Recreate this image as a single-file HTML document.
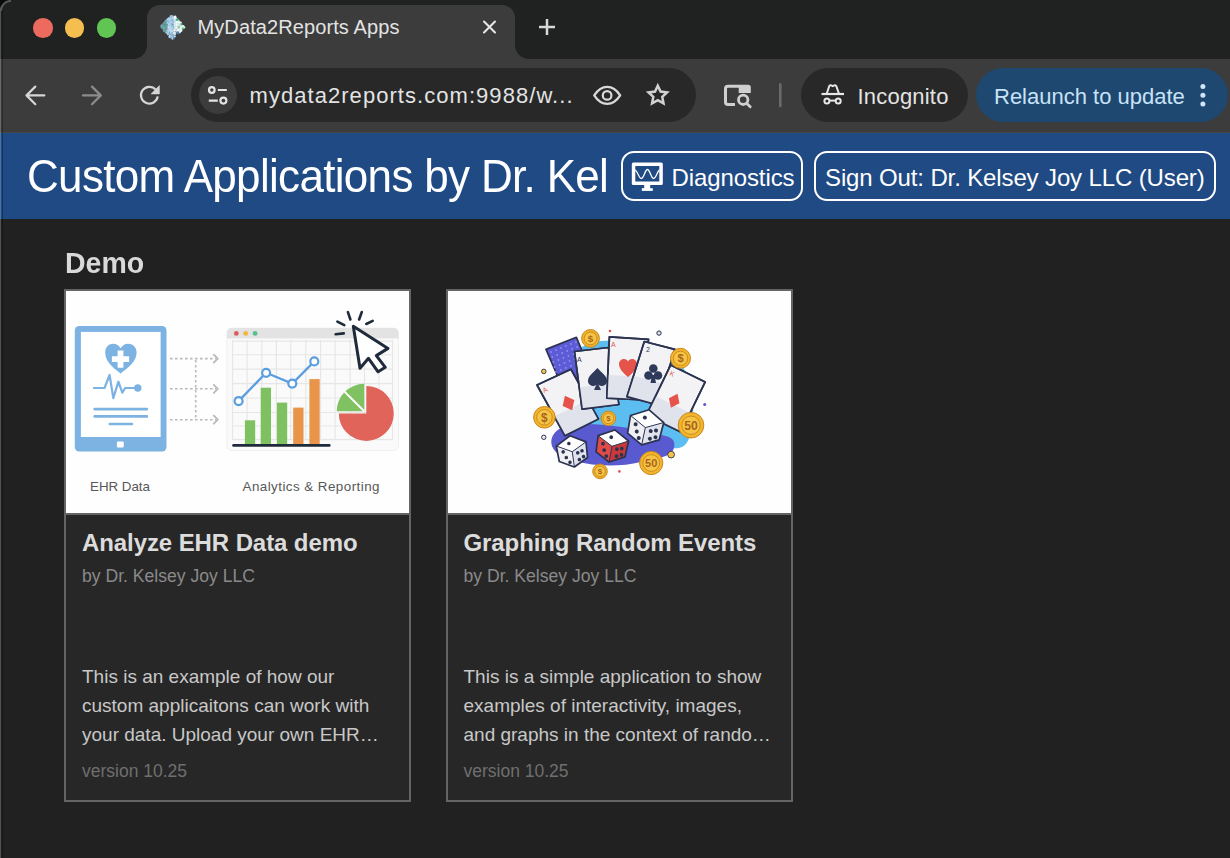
<!DOCTYPE html>
<html><head><meta charset="utf-8">
<style>
*{box-sizing:border-box;margin:0;padding:0}
html,body{width:1230px;height:858px;overflow:hidden;background:#212121;font-family:"Liberation Sans",sans-serif}
.abs{position:absolute}
#tabstrip{left:0;top:0;width:1230px;height:59px;background:#202121}
#toolbar{left:0;top:59px;width:1230px;height:74px;background:#3c3c3c}
#header{left:0;top:133px;width:1230px;height:86px;background:#1f4a84}
#winborder{left:0;top:0;width:3px;height:858px;border-left:1.8px solid rgba(255,255,255,0.22);border-right:1.2px solid rgba(0,0,0,0.3)}
.light{border-radius:50%;width:19.5px;height:19.5px;top:18px}
#tab{left:146.5px;top:5px;width:368px;height:54px;background:#3c3c3c;border-radius:13px 13px 0 0}
.flare{width:14px;height:14px;top:45px;background:#3c3c3c}
.flare i{position:absolute;left:0;top:0;width:14px;height:14px;background:#202121}
.tabtitle{left:197.5px;top:14px;font-size:20px;color:#e3e3e3;white-space:nowrap;line-height:26px;letter-spacing:0.1px}
#omni{left:191px;top:68px;width:505px;height:54px;background:#282828;border-radius:27px}
.pill{border-radius:27px;height:54px;top:68px}
.url{left:249.5px;top:83px;font-size:22px;color:#e3e3e3;white-space:nowrap;line-height:26px;letter-spacing:1.05px}
.title{left:27px;top:152px;width:582px;height:50px;overflow:hidden;font-size:44px;color:#fff;white-space:nowrap;line-height:50px;letter-spacing:-0.68px;transform:scaleY(1.07);transform-origin:0 39.5px}
.btn{border:2px solid #fff;border-radius:13px;height:50px;top:151px;color:#fff;font-size:24px;line-height:50px;white-space:nowrap}
.demo{left:65px;top:246px;font-size:28.5px;font-weight:700;color:#d9d9d9;line-height:34px;transform:scaleY(1.03);transform-origin:0 27px}
.card{top:289px;width:347px;height:513px;border:2px solid #646464;background:#272727}
.card .img{position:absolute;left:0;top:0;width:343px;height:224px;background:#fff;border-bottom:2px solid #646464;overflow:hidden}
.ct{position:absolute;left:16px;top:238px;font-size:24px;letter-spacing:-0.09px;font-weight:700;color:#dcdcdc;white-space:nowrap;line-height:28px}
.cs{position:absolute;left:16px;top:274.5px;font-size:17.6px;color:#8a8a8a;white-space:nowrap;line-height:20px}
.cd{position:absolute;left:16px;top:371px;width:330px;font-size:19px;white-space:nowrap;color:#c8c8c8;line-height:29px}
.cv{position:absolute;left:16px;top:470px;font-size:17.5px;color:#6f6f6f;white-space:nowrap;line-height:20px}
</style></head>
<body>
<div id="tabstrip" class="abs"></div>
<div id="toolbar" class="abs"></div>
<div id="header" class="abs"></div>
<div class="abs" style="left:0;top:132px;width:1230px;height:1px;background:#474747"></div>
<div id="winborder" class="abs"></div>
<svg class="abs" style="left:0;top:0" width="14" height="14"><path d="M0 0 H11 A11 11 0 0 0 0 11 Z" fill="#0a0a0a"/><path d="M11 0.9 A10.1 10.1 0 0 0 0.9 11" fill="none" stroke="#5a5a5a" stroke-width="1.8"/></svg>

<!-- traffic lights -->
<div class="abs light" style="left:33px;background:#ec6a5e"></div>
<div class="abs light" style="left:64.8px;background:#f4bf4f"></div>
<div class="abs light" style="left:96.7px;background:#61c554"></div>

<!-- tab -->
<div id="tab" class="abs"></div>
<div class="abs flare" style="left:132.5px"><i style="border-bottom-right-radius:14px"></i></div>
<div class="abs flare" style="left:514.5px"><i style="border-bottom-left-radius:14px"></i></div>

<svg class="abs" style="left:155px;top:10px" width="35" height="35" viewBox="0 0 35 35"><defs><filter id="fb" x="-20%" y="-20%" width="140%" height="140%"><feGaussianBlur stdDeviation="0.35"/></filter></defs><g filter="url(#fb)"><path d="M17.5 5 L23.5 8.5 L27.5 14.5 L26 21 L22 23 L18.5 29 L14 25 L8 21 L6 15 L11 9 Z" fill="#a9cbe0" opacity="0.5"/><circle cx="16.2" cy="10.0" r="1.10" fill="#9cc6e6" opacity="0.90"/><circle cx="20.1" cy="6.9" r="1.38" fill="#e8f3f8" opacity="0.95"/><circle cx="20.3" cy="8.3" r="1.38" fill="#ffffff" opacity="0.95"/><circle cx="11.8" cy="19.5" r="1.12" fill="#9cc6e6" opacity="0.90"/><circle cx="13.2" cy="11.6" r="0.83" fill="#7fb2dc" opacity="0.90"/><circle cx="16.3" cy="8.2" r="1.38" fill="#7fb2dc" opacity="0.90"/><circle cx="24.5" cy="13.2" r="1.29" fill="#c6e4d6" opacity="0.95"/><circle cx="15.8" cy="22.3" r="0.78" fill="#b6d6ee" opacity="0.90"/><circle cx="16.0" cy="17.1" r="1.24" fill="#7fb2dc" opacity="0.90"/><circle cx="18.2" cy="11.8" r="0.91" fill="#7fb2dc" opacity="0.90"/><circle cx="24.8" cy="20.1" r="1.40" fill="#d4e8f2" opacity="0.95"/><circle cx="14.6" cy="9.8" r="1.28" fill="#7fb2dc" opacity="0.90"/><circle cx="15.8" cy="14.7" r="1.39" fill="#9cc6e6" opacity="0.90"/><circle cx="14.8" cy="8.0" r="0.80" fill="#7fb2dc" opacity="0.90"/><circle cx="15.8" cy="16.4" r="1.04" fill="#7fb2dc" opacity="0.90"/><circle cx="11.6" cy="14.2" r="0.78" fill="#6ab0b8" opacity="0.69"/><circle cx="25.4" cy="17.6" r="1.14" fill="#ffffff" opacity="0.95"/><circle cx="17.0" cy="12.5" r="1.04" fill="#9cc6e6" opacity="0.90"/><circle cx="17.4" cy="18.0" r="0.74" fill="#7fb2dc" opacity="0.90"/><circle cx="24.7" cy="12.9" r="1.16" fill="#c6e4d6" opacity="0.95"/><circle cx="23.8" cy="13.1" r="1.28" fill="#d4e8f2" opacity="0.95"/><circle cx="26.1" cy="16.1" r="0.93" fill="#d4e8f2" opacity="0.95"/><circle cx="11.1" cy="11.2" r="0.94" fill="#4e9a88" opacity="0.66"/><circle cx="25.5" cy="12.8" r="1.31" fill="#ffffff" opacity="0.95"/><circle cx="28.9" cy="17.2" r="1.39" fill="#c6e4d6" opacity="0.95"/><circle cx="9.2" cy="13.1" r="0.90" fill="#7bb6c8" opacity="0.55"/><circle cx="14.8" cy="19.8" r="0.91" fill="#cfe4f2" opacity="0.90"/><circle cx="18.4" cy="26.5" r="1.20" fill="#7fb2dc" opacity="0.90"/><circle cx="15.5" cy="20.7" r="1.23" fill="#b6d6ee" opacity="0.90"/><circle cx="16.5" cy="18.0" r="1.03" fill="#cfe4f2" opacity="0.90"/><circle cx="13.9" cy="19.7" r="0.87" fill="#b6d6ee" opacity="0.90"/><circle cx="14.5" cy="10.9" r="1.31" fill="#cfe4f2" opacity="0.90"/><circle cx="21.9" cy="18.0" r="1.08" fill="#e8f3f8" opacity="0.95"/><circle cx="11.8" cy="11.3" r="1.37" fill="#7fb2dc" opacity="0.90"/><circle cx="11.6" cy="12.8" r="0.99" fill="#6ab0b8" opacity="0.69"/><circle cx="25.1" cy="20.5" r="1.03" fill="#d4e8f2" opacity="0.95"/><circle cx="16.4" cy="8.8" r="1.13" fill="#b6d6ee" opacity="0.90"/><circle cx="18.7" cy="19.8" r="0.93" fill="#b6d6ee" opacity="0.90"/><circle cx="26.8" cy="18.5" r="1.00" fill="#eaf4f8" opacity="0.95"/><circle cx="19.5" cy="10.4" r="1.05" fill="#d4e8f2" opacity="0.95"/><circle cx="14.8" cy="12.0" r="1.04" fill="#7fb2dc" opacity="0.90"/><circle cx="11.4" cy="16.1" r="1.16" fill="#5fa6a0" opacity="0.68"/><circle cx="14.2" cy="16.2" r="0.87" fill="#7fb2dc" opacity="0.90"/><circle cx="16.7" cy="25.9" r="0.91" fill="#7fb2dc" opacity="0.90"/><circle cx="19.8" cy="16.1" r="1.32" fill="#c6e4d6" opacity="0.95"/><circle cx="22.4" cy="19.8" r="0.72" fill="#c6e4d6" opacity="0.95"/><circle cx="13.1" cy="21.6" r="0.73" fill="#b6d6ee" opacity="0.90"/><circle cx="10.6" cy="15.6" r="1.32" fill="#5fa6a0" opacity="0.63"/><circle cx="24.2" cy="14.8" r="1.18" fill="#c6e4d6" opacity="0.95"/><circle cx="16.4" cy="21.6" r="1.33" fill="#b6d6ee" opacity="0.90"/><circle cx="16.1" cy="23.6" r="1.29" fill="#7fb2dc" opacity="0.90"/><circle cx="22.1" cy="15.0" r="1.15" fill="#d4e8f2" opacity="0.95"/><circle cx="16.3" cy="11.7" r="1.03" fill="#b6d6ee" opacity="0.90"/><circle cx="18.3" cy="16.7" r="1.08" fill="#7fb2dc" opacity="0.90"/><circle cx="15.1" cy="17.8" r="0.75" fill="#9cc6e6" opacity="0.90"/><circle cx="24.6" cy="21.1" r="0.93" fill="#e8f3f8" opacity="0.95"/><circle cx="14.5" cy="16.4" r="1.29" fill="#9cc6e6" opacity="0.90"/><circle cx="9.7" cy="20.6" r="1.20" fill="#5fa6a0" opacity="0.58"/><circle cx="19.9" cy="14.5" r="0.75" fill="#ffffff" opacity="0.95"/><circle cx="9.5" cy="18.2" r="1.22" fill="#7bb6c8" opacity="0.57"/><circle cx="11.3" cy="18.6" r="1.22" fill="#5fa6a0" opacity="0.67"/><circle cx="15.2" cy="11.8" r="1.04" fill="#cfe4f2" opacity="0.90"/><circle cx="17.2" cy="27.6" r="0.88" fill="#b6d6ee" opacity="0.90"/><circle cx="18.3" cy="10.2" r="1.06" fill="#7fb2dc" opacity="0.90"/><circle cx="13.7" cy="23.0" r="0.79" fill="#b6d6ee" opacity="0.90"/><circle cx="26.4" cy="16.9" r="0.87" fill="#eaf4f8" opacity="0.95"/><circle cx="26.8" cy="16.2" r="0.78" fill="#d4e8f2" opacity="0.95"/><circle cx="17.8" cy="17.9" r="0.74" fill="#cfe4f2" opacity="0.90"/><circle cx="21.7" cy="9.4" r="0.76" fill="#e8f3f8" opacity="0.95"/><circle cx="27.7" cy="16.5" r="0.80" fill="#ffffff" opacity="0.95"/><circle cx="20.2" cy="12.9" r="0.90" fill="#ffffff" opacity="0.95"/><circle cx="24.7" cy="13.5" r="1.15" fill="#d4e8f2" opacity="0.95"/><circle cx="24.9" cy="15.0" r="1.06" fill="#d4e8f2" opacity="0.95"/><circle cx="19.4" cy="18.7" r="0.98" fill="#ffffff" opacity="0.95"/><circle cx="27.1" cy="16.2" r="0.70" fill="#d4e8f2" opacity="0.95"/><circle cx="16.2" cy="27.1" r="0.93" fill="#cfe4f2" opacity="0.90"/><circle cx="16.0" cy="8.6" r="0.75" fill="#b6d6ee" opacity="0.90"/><circle cx="16.2" cy="18.1" r="0.89" fill="#9cc6e6" opacity="0.90"/><circle cx="10.1" cy="16.3" r="0.94" fill="#5fa6a0" opacity="0.60"/><circle cx="23.6" cy="11.9" r="1.18" fill="#e8f3f8" opacity="0.95"/><circle cx="21.5" cy="16.0" r="0.78" fill="#ffffff" opacity="0.95"/><circle cx="21.4" cy="11.2" r="1.21" fill="#ffffff" opacity="0.95"/><circle cx="12.1" cy="15.9" r="0.75" fill="#7fb2dc" opacity="0.90"/><circle cx="19.8" cy="22.8" r="0.70" fill="#d4e8f2" opacity="0.95"/><circle cx="17.5" cy="12.8" r="1.20" fill="#9cc6e6" opacity="0.90"/><circle cx="6.4" cy="16.0" r="1.15" fill="#6ab0b8" opacity="0.39"/><circle cx="16.9" cy="24.2" r="0.88" fill="#9cc6e6" opacity="0.90"/><circle cx="14.6" cy="11.6" r="1.31" fill="#9cc6e6" opacity="0.90"/><circle cx="22.1" cy="20.5" r="1.07" fill="#ffffff" opacity="0.95"/><circle cx="6.8" cy="17.9" r="1.12" fill="#6ab0b8" opacity="0.41"/><circle cx="16.7" cy="18.6" r="1.07" fill="#cfe4f2" opacity="0.90"/><circle cx="23.7" cy="21.7" r="1.09" fill="#ffffff" opacity="0.95"/><circle cx="7.6" cy="16.3" r="1.27" fill="#4e9a88" opacity="0.46"/><circle cx="19.0" cy="10.0" r="1.04" fill="#9cc6e6" opacity="0.90"/><circle cx="10.5" cy="22.1" r="1.32" fill="#4e9a88" opacity="0.62"/><circle cx="24.0" cy="13.6" r="0.70" fill="#c6e4d6" opacity="0.95"/><circle cx="18.6" cy="12.0" r="0.82" fill="#7fb2dc" opacity="0.90"/><circle cx="10.8" cy="21.4" r="0.72" fill="#4e9a88" opacity="0.64"/><circle cx="18.1" cy="23.1" r="0.72" fill="#9cc6e6" opacity="0.90"/><circle cx="10.0" cy="14.9" r="0.84" fill="#4e9a88" opacity="0.60"/><circle cx="20.1" cy="7.8" r="0.89" fill="#e8f3f8" opacity="0.95"/><circle cx="19.8" cy="20.2" r="1.01" fill="#ffffff" opacity="0.95"/><circle cx="27.8" cy="15.7" r="0.82" fill="#eaf4f8" opacity="0.95"/><circle cx="8.2" cy="16.0" r="1.12" fill="#7bb6c8" opacity="0.49"/><circle cx="19.0" cy="16.3" r="0.97" fill="#7fb2dc" opacity="0.90"/><circle cx="9.2" cy="18.4" r="1.24" fill="#4e9a88" opacity="0.55"/><circle cx="24.4" cy="13.2" r="1.27" fill="#ffffff" opacity="0.95"/><circle cx="5.6" cy="16.6" r="0.80" fill="#4e9a88" opacity="0.34"/><circle cx="25.6" cy="16.5" r="0.77" fill="#e8f3f8" opacity="0.95"/><circle cx="14.3" cy="23.5" r="1.33" fill="#7fb2dc" opacity="0.90"/><circle cx="12.4" cy="21.6" r="1.26" fill="#9cc6e6" opacity="0.90"/><circle cx="17.3" cy="19.0" r="1.27" fill="#b6d6ee" opacity="0.90"/><circle cx="19.9" cy="17.1" r="1.03" fill="#c6e4d6" opacity="0.95"/><circle cx="22.3" cy="14.1" r="1.35" fill="#c6e4d6" opacity="0.95"/><circle cx="22.0" cy="21.3" r="0.80" fill="#c6e4d6" opacity="0.95"/><circle cx="19.9" cy="26.4" r="0.91" fill="#eaf4f8" opacity="0.95"/><circle cx="23.6" cy="21.3" r="1.33" fill="#d4e8f2" opacity="0.95"/><circle cx="23.2" cy="19.7" r="1.04" fill="#ffffff" opacity="0.95"/><circle cx="12.9" cy="24.3" r="0.98" fill="#cfe4f2" opacity="0.90"/><circle cx="20.0" cy="13.7" r="1.29" fill="#e8f3f8" opacity="0.95"/><circle cx="8.8" cy="20.9" r="0.99" fill="#7bb6c8" opacity="0.53"/><circle cx="15.1" cy="17.5" r="0.91" fill="#b6d6ee" opacity="0.90"/><circle cx="11.3" cy="19.5" r="0.83" fill="#4e9a88" opacity="0.67"/><circle cx="18.6" cy="19.5" r="1.00" fill="#b6d6ee" opacity="0.90"/><circle cx="24.5" cy="12.2" r="0.74" fill="#e8f3f8" opacity="0.95"/><circle cx="16.6" cy="25.6" r="0.92" fill="#9cc6e6" opacity="0.90"/><circle cx="26.1" cy="20.6" r="1.33" fill="#ffffff" opacity="0.95"/><circle cx="20.0" cy="24.6" r="0.70" fill="#e8f3f8" opacity="0.95"/><circle cx="12.7" cy="13.2" r="1.10" fill="#9cc6e6" opacity="0.90"/><circle cx="15.5" cy="12.1" r="1.20" fill="#b6d6ee" opacity="0.90"/><circle cx="13.7" cy="15.7" r="0.87" fill="#9cc6e6" opacity="0.90"/><circle cx="28.5" cy="15.8" r="0.78" fill="#e8f3f8" opacity="0.95"/><circle cx="19.5" cy="13.4" r="1.05" fill="#e8f3f8" opacity="0.95"/><circle cx="22.8" cy="11.3" r="1.27" fill="#e8f3f8" opacity="0.95"/><circle cx="11.0" cy="22.6" r="0.89" fill="#6ab0b8" opacity="0.66"/><circle cx="6.5" cy="16.2" r="1.08" fill="#6ab0b8" opacity="0.39"/><circle cx="23.9" cy="13.1" r="0.71" fill="#e8f3f8" opacity="0.95"/><circle cx="17.5" cy="28.8" r="1.06" fill="#cfe4f2" opacity="0.90"/><circle cx="24.2" cy="15.0" r="1.36" fill="#c6e4d6" opacity="0.95"/><circle cx="21.2" cy="19.9" r="0.73" fill="#c6e4d6" opacity="0.95"/><circle cx="14.7" cy="26.7" r="1.34" fill="#cfe4f2" opacity="0.90"/><circle cx="15.0" cy="10.7" r="0.95" fill="#cfe4f2" opacity="0.90"/><circle cx="23.4" cy="16.6" r="1.12" fill="#d4e8f2" opacity="0.95"/><circle cx="15.2" cy="10.6" r="0.93" fill="#7fb2dc" opacity="0.90"/><circle cx="18.5" cy="11.0" r="1.15" fill="#9cc6e6" opacity="0.90"/><circle cx="13.7" cy="13.3" r="1.08" fill="#cfe4f2" opacity="0.90"/><circle cx="15.5" cy="26.6" r="0.88" fill="#b6d6ee" opacity="0.90"/><circle cx="18.2" cy="22.9" r="0.87" fill="#b6d6ee" opacity="0.90"/><circle cx="24.2" cy="18.3" r="1.02" fill="#eaf4f8" opacity="0.95"/><circle cx="13.6" cy="17.5" r="1.39" fill="#cfe4f2" opacity="0.90"/><circle cx="15.7" cy="23.0" r="0.77" fill="#cfe4f2" opacity="0.90"/><circle cx="17.3" cy="25.2" r="1.28" fill="#7fb2dc" opacity="0.90"/><circle cx="16.9" cy="18.5" r="1.10" fill="#b6d6ee" opacity="0.90"/><circle cx="13.7" cy="12.5" r="1.04" fill="#7fb2dc" opacity="0.90"/><circle cx="24.5" cy="22.1" r="1.31" fill="#c6e4d6" opacity="0.95"/><circle cx="15.4" cy="27.3" r="1.12" fill="#b6d6ee" opacity="0.90"/><circle cx="18.7" cy="27.4" r="1.09" fill="#7fb2dc" opacity="0.90"/><circle cx="25.4" cy="16.6" r="0.72" fill="#e8f3f8" opacity="0.95"/><circle cx="14.7" cy="14.4" r="1.13" fill="#cfe4f2" opacity="0.90"/><circle cx="10.7" cy="11.4" r="1.32" fill="#5fa6a0" opacity="0.64"/><circle cx="12.4" cy="20.9" r="1.03" fill="#cfe4f2" opacity="0.90"/><circle cx="15.1" cy="20.0" r="0.82" fill="#cfe4f2" opacity="0.90"/><circle cx="7.6" cy="16.5" r="1.35" fill="#7bb6c8" opacity="0.46"/><circle cx="15.3" cy="18.4" r="1.09" fill="#b6d6ee" opacity="0.90"/><circle cx="21.2" cy="14.6" r="1.29" fill="#d4e8f2" opacity="0.95"/><circle cx="10.7" cy="13.0" r="1.04" fill="#4e9a88" opacity="0.64"/><circle cx="25.1" cy="21.8" r="0.94" fill="#e8f3f8" opacity="0.95"/><circle cx="26.0" cy="18.9" r="1.24" fill="#e8f3f8" opacity="0.95"/><circle cx="18.1" cy="8.1" r="1.21" fill="#7fb2dc" opacity="0.90"/><circle cx="10.8" cy="14.3" r="1.32" fill="#4e9a88" opacity="0.64"/><circle cx="12.1" cy="11.3" r="0.99" fill="#7fb2dc" opacity="0.90"/><circle cx="27.3" cy="16.9" r="1.02" fill="#e8f3f8" opacity="0.95"/><circle cx="28.4" cy="17.8" r="1.18" fill="#e8f3f8" opacity="0.95"/><circle cx="12.4" cy="13.1" r="1.03" fill="#9cc6e6" opacity="0.90"/><circle cx="7.0" cy="17.7" r="1.16" fill="#5fa6a0" opacity="0.42"/><circle cx="21.3" cy="13.6" r="0.89" fill="#e8f3f8" opacity="0.95"/><circle cx="15.1" cy="9.0" r="0.97" fill="#b6d6ee" opacity="0.90"/><circle cx="17.8" cy="7.2" r="1.30" fill="#9cc6e6" opacity="0.90"/><circle cx="20.7" cy="11.6" r="1.34" fill="#c6e4d6" opacity="0.95"/><circle cx="18.9" cy="16.8" r="0.82" fill="#7fb2dc" opacity="0.90"/><circle cx="20.3" cy="15.6" r="1.23" fill="#eaf4f8" opacity="0.95"/><circle cx="19.7" cy="7.1" r="1.02" fill="#ffffff" opacity="0.95"/><circle cx="15.6" cy="9.7" r="0.82" fill="#b6d6ee" opacity="0.90"/><circle cx="10.5" cy="12.9" r="1.08" fill="#5fa6a0" opacity="0.63"/><circle cx="18.4" cy="9.0" r="0.94" fill="#9cc6e6" opacity="0.90"/><circle cx="19.4" cy="20.4" r="1.31" fill="#eaf4f8" opacity="0.95"/><circle cx="17.6" cy="19.5" r="0.74" fill="#7fb2dc" opacity="0.90"/><circle cx="11.5" cy="17.4" r="0.99" fill="#4e9a88" opacity="0.68"/><circle cx="14.9" cy="25.7" r="0.94" fill="#cfe4f2" opacity="0.90"/><circle cx="23.0" cy="16.9" r="1.25" fill="#c6e4d6" opacity="0.95"/><circle cx="21.0" cy="17.8" r="1.24" fill="#eaf4f8" opacity="0.95"/><circle cx="17.9" cy="16.2" r="1.22" fill="#9cc6e6" opacity="0.90"/><circle cx="17.2" cy="21.1" r="1.16" fill="#cfe4f2" opacity="0.90"/><circle cx="14.0" cy="20.6" r="1.15" fill="#b6d6ee" opacity="0.90"/><circle cx="19.1" cy="9.4" r="0.96" fill="#e8f3f8" opacity="0.95"/><circle cx="19.5" cy="23.6" r="1.25" fill="#eaf4f8" opacity="0.95"/><circle cx="15.1" cy="15.8" r="1.24" fill="#b6d6ee" opacity="0.90"/><circle cx="6.8" cy="15.6" r="1.33" fill="#7bb6c8" opacity="0.41"/><circle cx="16.2" cy="11.2" r="0.72" fill="#9cc6e6" opacity="0.90"/><circle cx="20.0" cy="22.5" r="0.84" fill="#c6e4d6" opacity="0.95"/><circle cx="20.9" cy="15.3" r="0.84" fill="#c6e4d6" opacity="0.95"/><circle cx="11.8" cy="22.8" r="0.97" fill="#cfe4f2" opacity="0.90"/><circle cx="14.0" cy="8.5" r="0.98" fill="#b6d6ee" opacity="0.90"/><circle cx="15.7" cy="14.3" r="0.89" fill="#9cc6e6" opacity="0.90"/><circle cx="17.6" cy="8.8" r="1.23" fill="#7fb2dc" opacity="0.90"/><circle cx="24.6" cy="14.5" r="1.32" fill="#c6e4d6" opacity="0.95"/><circle cx="22.6" cy="15.3" r="0.84" fill="#ffffff" opacity="0.95"/><circle cx="19.1" cy="22.5" r="0.83" fill="#e8f3f8" opacity="0.95"/><circle cx="17.9" cy="25.8" r="1.14" fill="#7fb2dc" opacity="0.90"/><circle cx="22.4" cy="15.0" r="1.14" fill="#ffffff" opacity="0.95"/><circle cx="8.7" cy="17.9" r="1.36" fill="#7bb6c8" opacity="0.52"/><circle cx="23.3" cy="22.1" r="1.37" fill="#eaf4f8" opacity="0.95"/><circle cx="23.7" cy="16.2" r="1.02" fill="#c6e4d6" opacity="0.95"/><circle cx="18.0" cy="8.0" r="1.09" fill="#cfe4f2" opacity="0.90"/><circle cx="16.5" cy="6.4" r="1.24" fill="#9cc6e6" opacity="0.90"/><circle cx="16.6" cy="5.7" r="0.77" fill="#7fb2dc" opacity="0.90"/><circle cx="23.0" cy="14.3" r="0.95" fill="#d4e8f2" opacity="0.95"/><circle cx="16.7" cy="26.8" r="1.01" fill="#b6d6ee" opacity="0.90"/><circle cx="21.5" cy="10.0" r="1.28" fill="#d4e8f2" opacity="0.95"/><circle cx="13.8" cy="14.5" r="0.94" fill="#b6d6ee" opacity="0.90"/><circle cx="12.9" cy="9.0" r="1.02" fill="#9cc6e6" opacity="0.90"/><circle cx="12.5" cy="21.7" r="1.19" fill="#cfe4f2" opacity="0.90"/><circle cx="16.0" cy="27.1" r="1.06" fill="#7fb2dc" opacity="0.90"/><circle cx="6.4" cy="17.0" r="0.99" fill="#7bb6c8" opacity="0.39"/><circle cx="18.8" cy="19.1" r="0.75" fill="#9cc6e6" opacity="0.90"/><circle cx="11.4" cy="20.9" r="1.00" fill="#5fa6a0" opacity="0.68"/><circle cx="11.7" cy="21.9" r="1.29" fill="#7bb6c8" opacity="0.69"/><circle cx="8.6" cy="16.1" r="1.29" fill="#4e9a88" opacity="0.52"/><circle cx="12.8" cy="20.1" r="0.97" fill="#9cc6e6" opacity="0.90"/><circle cx="22.9" cy="15.6" r="0.83" fill="#d4e8f2" opacity="0.95"/><circle cx="21.8" cy="11.9" r="1.13" fill="#ffffff" opacity="0.95"/><circle cx="15.4" cy="19.8" r="0.78" fill="#cfe4f2" opacity="0.90"/><circle cx="13.8" cy="8.6" r="1.16" fill="#b6d6ee" opacity="0.90"/><circle cx="10.3" cy="16.7" r="1.33" fill="#5fa6a0" opacity="0.62"/><circle cx="24.2" cy="11.6" r="0.94" fill="#d4e8f2" opacity="0.95"/><circle cx="12.2" cy="13.3" r="0.72" fill="#9cc6e6" opacity="0.90"/><circle cx="18.5" cy="13.7" r="0.90" fill="#9cc6e6" opacity="0.90"/><circle cx="15.9" cy="6.7" r="1.35" fill="#9cc6e6" opacity="0.90"/><circle cx="12.3" cy="9.9" r="0.70" fill="#cfe4f2" opacity="0.90"/><circle cx="28.6" cy="17.3" r="0.92" fill="#d4e8f2" opacity="0.95"/><circle cx="22" cy="9.8" r="1.3" fill="#3dbb6a"/><circle cx="26.3" cy="14" r="1.1" fill="#4cc070"/><circle cx="27.8" cy="18.6" r="1.1" fill="#4cc070"/><circle cx="24" cy="17" r="0.9" fill="#5ec880"/><circle cx="23" cy="22.5" r="1.2" fill="#3a84c8"/><circle cx="18.8" cy="28.2" r="1" fill="#3a84c8"/></g></svg>
<div class="abs tabtitle">MyData2Reports Apps</div>

<!-- omnibox -->
<div id="omni" class="abs"></div>
<div class="abs url">mydata2reports.com:9988/w...</div>

<!-- incognito -->
<div class="abs pill" style="left:801px;width:167px;background:#282828"></div>
<div class="abs" style="left:857.5px;top:83.5px;font-size:22px;color:#e3e3e3;line-height:26px;letter-spacing:0.2px">Incognito</div>
<div class="abs pill" style="left:976px;width:252px;background:#1f4870"></div>
<div class="abs" style="left:994px;top:83.5px;font-size:22px;color:#c7e3f8;line-height:26px;letter-spacing:0px">Relaunch to update</div>

<!-- header -->
<div class="abs title">Custom Applications by Dr. Kelsey Joy LLC</div>
<div class="abs btn" style="left:621px;width:182px;padding-left:48.5px;letter-spacing:-0.1px">Diagnostics</div>
<div class="abs btn" style="left:814px;width:402px;padding-left:9px;letter-spacing:-0.13px">Sign Out: Dr. Kelsey Joy LLC (User)</div>


<svg class="abs" style="left:0;top:0" width="1230" height="219" viewBox="0 0 1230 219">
 <g fill="none" stroke="#e3e3e3" stroke-width="2" stroke-linecap="round">
  <path d="M484 21.5 L495 32.5 M495 21.5 L484 32.5" stroke="#e6e6e6" stroke-width="2.1"/>
  <path d="M547 19 V35 M539 27 H555" stroke="#d8d8d8" stroke-width="2.5" stroke-linecap="butt"/>
 </g>
 <g fill="none" stroke="#d5d5d5" stroke-width="2.2" stroke-linecap="round" stroke-linejoin="round">
  <path d="M44.3 95.4 H27 M35.3 86.6 L26.5 95.4 L35.3 104.2"/>
  <path d="M83 95.4 H100.3 M92 86.6 L100.8 95.4 L92 104.2" stroke="#8c8c8c"/>
  <path d="M157.7 96.4 A8.4 8.4 0 1 1 155.6 89.6" stroke-linecap="butt"/>
 </g>
 <path d="M159.4 85.6 V93.9 H151 Z" fill="#d5d5d5" stroke="#d5d5d5" stroke-width="0.6" stroke-linejoin="round"/>
 <circle cx="218" cy="95" r="19" fill="#3c3c3c"/>
 <g fill="none" stroke="#e3e3e3" stroke-width="2.2">
  <circle cx="211.8" cy="90" r="2.8"/>
  <circle cx="223.4" cy="100.6" r="3"/>
  <path d="M217.8 90 H226.8 M208.8 100.6 H217.8"/>
 </g>
 <g fill="none" stroke="#d9d9d9" stroke-width="2.3">
  <path d="M594.2 95.3 C598 89.5, 602 86.8, 607.2 86.8 C612.4 86.8, 616.4 89.5, 620.2 95.3 C616.4 101.1, 612.4 103.8, 607.2 103.8 C602 103.8, 598 101.1, 594.2 95.3 Z" stroke-linejoin="round"/>
  <circle cx="607.1" cy="95.4" r="4.3" stroke-width="2.2"/>
  <path d="M657.80,85.70 L660.56,91.60 L667.03,92.40 L662.27,96.85 L663.50,103.25 L657.80,100.10 L652.10,103.25 L653.33,96.85 L648.57,92.40 L655.04,91.60Z" stroke-width="2.5" stroke-linejoin="miter" stroke="#d2d2d2"/>
 </g>
 <g fill="none" stroke="#d0d0d0" stroke-width="3">
  <path d="M735 104.4 H728 Q725.5 104.4 725.5 101.9 V88.7 Q725.5 86.2 728 86.2 H739"/>
  <circle cx="743.2" cy="99.8" r="4.7" stroke-width="2.8"/>
  <path d="M746.8 103.5 L750.2 106.8" stroke-width="2.8" stroke-linecap="round"/>
 </g>
 <path d="M738.7 84.7 H748 Q750.8 84.7 750.8 87.5 V92.9 H738.7 Z" fill="#d0d0d0"/>
 <rect x="779" y="83" width="2.6" height="24.3" rx="1.3" fill="#6a6a6a"/>
 <g fill="none" stroke="#e8e8e8" stroke-width="2.2" stroke-linejoin="round">
  <path d="M821.5 94 H844"/>
  <path d="M826.8 93.5 L829.2 86.2 Q829.7 85 831.2 85.4 L832.7 86.2 L834.3 85.4 Q835.8 85 836.3 86.2 L838.9 93.5" stroke-width="2"/>
  <circle cx="826.9" cy="101" r="2.5" stroke-width="2"/>
  <circle cx="838.2" cy="101" r="2.5" stroke-width="2"/>
  <path d="M829.5 100.6 H835.6" stroke-width="2"/>
 </g>
 <g fill="#cfe6fa">
  <circle cx="1202.9" cy="86.5" r="2.5"/><circle cx="1202.9" cy="95.3" r="2.5"/><circle cx="1202.9" cy="104" r="2.5"/>
 </g>
 <g fill="#fff">
  <path fill-rule="evenodd" d="M633.3 162.5 H661.3 Q662.8 162.5 662.8 164 V183.4 Q662.8 184.9 661.3 184.9 H633.3 Q631.8 184.9 631.8 183.4 V164 Q631.8 162.5 633.3 162.5 Z M635.3 166 V181.4 H659.3 V166 Z"/>
  <rect x="644.2" y="184" width="6" height="5"/>
  <rect x="641.8" y="188.2" width="11" height="2.7"/>
 </g>
 <path d="M635.2 170 C638 172, 639 178.5, 641.2 178.5 C644 178.5, 645 169.5, 647.4 169.5 C650 169.5, 651 178.5, 653.5 178.5 C656 178.5, 657 172, 659.4 170" fill="none" stroke="#fff" stroke-width="1.3"/>
</svg>

<div class="abs demo">Demo</div>

<div class="abs card" style="left:64px">
  <div class="img"><svg width="343" height="222" viewBox="66 291 343 222" style="position:absolute;left:0;top:0">
 <rect x="66" y="291" width="343" height="222" fill="#fefefe"/>
 <!-- tablet -->
 <rect x="74.8" y="326" width="91.7" height="125.5" rx="4.5" fill="#7db3e2"/>
 <rect x="80.9" y="331.9" width="79.7" height="105.1" fill="#fff"/>
 <rect x="116.9" y="441.4" width="6.8" height="6.2" rx="1" fill="#fff"/>
 <path d="M120.6 373.5 C112 367, 105.2 361, 105.2 352.5 C105.2 347, 109 343.7, 113.2 343.7 C116.5 343.7, 119 345.5, 120.6 348.2 C122.2 345.5, 124.7 343.7, 128 343.7 C132.5 343.7, 136.6 347, 136.6 352.5 C136.6 361, 129.2 367, 120.6 373.5 Z" fill="#7db3e2"/>
 <path d="M117.6 350.5 H123.4 V356.2 H129.1 V362 H123.4 V367.7 H117.6 V362 H111.9 V356.2 H117.6 Z" fill="#fff"/>
 <path d="M93.9 388 H104.5 L109.6 375 L113.3 398.1 L118.4 381.7 L122.3 392.7 L125.1 388 H137.8" fill="none" stroke="#7db3e2" stroke-width="2.2" stroke-linejoin="round" stroke-linecap="round"/>
 <circle cx="137.8" cy="388" r="3.7" fill="#7db3e2"/>
 <g stroke="#7db3e2" stroke-width="2.6" stroke-linecap="round">
  <path d="M94.6 409.1 H146.9 M94.6 416.4 H146.9 M109.8 424 H132"/>
 </g>
 <!-- dashed connectors -->
 <g stroke="#b9b9b9" stroke-width="1.6" fill="none" stroke-dasharray="2.6 2.4">
  <path d="M170 358.6 H216 M170 388.8 H216 M170 419.7 H216 M195.7 360 V419"/>
 </g>
 <g stroke="#b9b9b9" stroke-width="1.8" fill="none" stroke-linecap="round" stroke-linejoin="round">
  <path d="M213.8 354.6 L217.8 358.6 L213.8 362.6 M213.8 384.8 L217.8 388.8 L213.8 392.8 M213.8 415.7 L217.8 419.7 L213.8 423.7"/>
 </g>
 <!-- browser window -->
 <rect x="226.9" y="328.1" width="171.6" height="122.3" rx="5" fill="#fafafa" stroke="#efefef" stroke-width="1"/>
 <path d="M226.9 338.4 V333.1 Q226.9 328.1 231.9 328.1 H393.5 Q398.5 328.1 398.5 333.1 V338.4 Z" fill="#e3e3e3"/>
 <circle cx="236.3" cy="333.4" r="2.4" fill="#e05c5c"/>
 <circle cx="245.7" cy="333.4" r="2.4" fill="#f0b840"/>
 <circle cx="255.1" cy="333.4" r="2.4" fill="#58c08a"/>
 <g stroke="#e6e6e6" stroke-width="1.1">
  <path d="M232.6 340 V440 M247.1 340 V440 M261.9 340 V440 M276.4 340 V440 M290.8 340 V440 M305.8 340 V440 M320.6 340 V440 M335.1 340 V440 M350.1 340 V440 M364.5 340 V440 M379 340 V440 M392.5 340 V440"/>
  <path d="M232.6 341.1 H392.5 M232.6 354.7 H392.5 M232.6 369.1 H392.5 M232.6 383.6 H392.5 M232.6 398 H392.5 M232.6 412.5 H392.5 M232.6 426 H392.5 M232.6 439.6 H392.5"/>
 </g>
 <rect x="244.9" y="420.3" width="10.3" height="24" fill="#7dc160"/>
 <rect x="260.7" y="387.7" width="10.3" height="56.6" fill="#7dc160"/>
 <rect x="276.9" y="402.6" width="10.3" height="41.7" fill="#7dc160"/>
 <rect x="293.2" y="407.6" width="10.3" height="36.7" fill="#e8944a"/>
 <rect x="309.4" y="379.1" width="10.3" height="65.2" fill="#e8944a"/>
 <path d="M233.5 445.4 H329.3" stroke="#1f2b3b" stroke-width="2.6" stroke-linecap="round"/>
 <path d="M238.6 401.1 L266.1 372.8 L292.3 383.6 L314.3 361.4" fill="none" stroke="#5b9ee0" stroke-width="2.3"/>
 <g fill="#fff" stroke="#5b9ee0" stroke-width="2.2">
  <circle cx="238.6" cy="401.1" r="4"/><circle cx="266.1" cy="372.8" r="4"/><circle cx="292.3" cy="383.6" r="4"/><circle cx="314.3" cy="361.4" r="4"/>
 </g>
 <!-- pie -->
 <path d="M366.3 413.4 V385.9 A27.5 27.5 0 1 1 338.8 413.4 Z" fill="#e0645a"/>
 <path d="M364.2 411.3 H336.7 A27.5 27.5 0 0 1 364.2 383.8 Z" fill="#80c262"/>
 <path d="M364.2 411.3 L343.5 390.6" stroke="#fff" stroke-width="2"/>
 <!-- cursor -->
 <path d="M353.3 326.3 L360 368.2 L368.5 358.3 L378.1 371.8 L385.3 367.3 L376.3 355.6 L388 348.4 Z" fill="#fff" stroke="#1f2b3b" stroke-width="3" stroke-linejoin="round"/>
 <g stroke="#1f2b3b" stroke-width="2.6" stroke-linecap="round">
  <path d="M347.9 312.2 L350.4 319.5 M361.8 312 L359.1 319.5 M337.4 321.6 L344.3 325.2 M366.3 324 L372.7 320.9 M335.6 334.3 L343.8 333.4"/>
 </g>
 <g font-family="Liberation Sans" font-size="13.4" fill="#585858">
  <text x="90" y="490.9" textLength="60" lengthAdjust="spacing">EHR Data</text>
  <text x="242.5" y="490.9" textLength="137" lengthAdjust="spacing">Analytics &amp; Reporting</text>
 </g>
</svg>
</div>
  <div class="ct">Analyze EHR Data demo</div>
  <div class="cs">by Dr. Kelsey Joy LLC</div>
  <div class="cd">This is an example of how our<br>custom applicaitons can work with<br>your data. Upload your own EHR…</div>
  <div class="cv">version 10.25</div>
</div>
<div class="abs card" style="left:445.5px">
  <div class="img"><svg width="343" height="222" viewBox="447 291 343 222" style="position:absolute;left:0;top:0">
<rect x="447" y="291" width="343" height="222" fill="#fefefe"/>
<path d="M575 352 C590 336, 620 340, 650 345 C680 350, 695 380, 692 420 C690 440, 685 450, 672 448 C640 445, 600 440, 570 430 C545 420, 555 365, 575 352 Z" fill="#5cbdf0"/>
<path d="M560 428 C575 420, 620 425, 645 432 C665 436, 676 436, 673 448 C670 458, 655 458, 640 462 C615 468, 585 466, 565 458 C548 452, 545 436, 560 428 Z" fill="#5a5ad0"/>
<path d="M545.0,349.4 L575.4,337.3 L590.0,372.0 L560.0,384.0 Z" fill="#5d5cd6" stroke="#2b3350" stroke-width="1.7" stroke-linejoin="round"/>
<g fill="#8f8ff0"><circle cx="550.0" cy="352.0" r="0.9"/><circle cx="551.2" cy="357.0" r="0.9"/><circle cx="552.4" cy="362.0" r="0.9"/><circle cx="553.6" cy="367.0" r="0.9"/><circle cx="554.8" cy="372.0" r="0.9"/><circle cx="556.0" cy="377.0" r="0.9"/><circle cx="555.0" cy="350.0" r="0.9"/><circle cx="556.2" cy="355.0" r="0.9"/><circle cx="557.4" cy="360.0" r="0.9"/><circle cx="558.6" cy="365.0" r="0.9"/><circle cx="559.8" cy="370.0" r="0.9"/><circle cx="561.0" cy="375.0" r="0.9"/><circle cx="560.0" cy="348.0" r="0.9"/><circle cx="561.2" cy="353.0" r="0.9"/><circle cx="562.4" cy="358.0" r="0.9"/><circle cx="563.6" cy="363.0" r="0.9"/><circle cx="564.8" cy="368.0" r="0.9"/><circle cx="566.0" cy="373.0" r="0.9"/><circle cx="565.0" cy="346.0" r="0.9"/><circle cx="566.2" cy="351.0" r="0.9"/><circle cx="567.4" cy="356.0" r="0.9"/><circle cx="568.6" cy="361.0" r="0.9"/><circle cx="569.8" cy="366.0" r="0.9"/><circle cx="571.0" cy="371.0" r="0.9"/><circle cx="570.0" cy="344.0" r="0.9"/><circle cx="571.2" cy="349.0" r="0.9"/><circle cx="572.4" cy="354.0" r="0.9"/><circle cx="573.6" cy="359.0" r="0.9"/><circle cx="574.8" cy="364.0" r="0.9"/><circle cx="576.0" cy="369.0" r="0.9"/><circle cx="575.0" cy="342.0" r="0.9"/><circle cx="576.2" cy="347.0" r="0.9"/><circle cx="577.4" cy="352.0" r="0.9"/><circle cx="578.6" cy="357.0" r="0.9"/><circle cx="579.8" cy="362.0" r="0.9"/><circle cx="581.0" cy="367.0" r="0.9"/></g>
<path d="M536.0,385.0 L570.0,369.3 L597.4,418.9 L563.8,435.7 Z" fill="#f3f3f5" stroke="#2b3350" stroke-width="1.7" stroke-linejoin="round"/>
<path d="M553.2,416.4 L587.0,400.1 L597.4,418.9 L563.8,435.7 Z" fill="#e0e2ec"/>
<path d="M536.0,385.0 L570.0,369.3 L597.4,418.9 L563.8,435.7 Z" fill="none" stroke="#2b3350" stroke-width="1.7" stroke-linejoin="round"/>
<path d="M567.5 395 L574 403 L567.5 411 L561 403 Z" fill="#e5534b" transform="rotate(-27 567.5 403)"/>
<text x="543" y="393" font-family="Liberation Sans" font-size="7" fill="#e5534b" transform="rotate(-27 543 393)">A</text>
<path d="M573.5,351.5 L607.4,347.5 L617.9,404.5 L581.1,409.2 Z" fill="#f3f3f5" stroke="#2b3350" stroke-width="1.7" stroke-linejoin="round"/>
<path d="M578.2,387.3 L613.9,382.8 L617.9,404.5 L581.1,409.2 Z" fill="#e0e2ec"/>
<path d="M573.5,351.5 L607.4,347.5 L617.9,404.5 L581.1,409.2 Z" fill="none" stroke="#2b3350" stroke-width="1.7" stroke-linejoin="round"/>
<path d="M596.4 368 C592 373, 587 376, 587 381 C587 384.5, 590 386, 592.5 386 C594 386, 595 385, 595.5 384.5 L593 390 H600 L597.3 384.5 C598 385, 599 386, 600.5 386 C603 386, 606 384.5, 606 381 C606 376, 601 373, 596.4 368 Z" fill="#2f3a5a"/>
<text x="576" y="362" font-family="Liberation Sans" font-size="7" fill="#2f3a5a">A</text>
<path d="M608.4,336.8 L647.5,339.4 L643.0,400.0 L605.8,398.2 Z" fill="#f3f3f5" stroke="#2b3350" stroke-width="1.7" stroke-linejoin="round"/>
<path d="M606.8,374.9 L644.7,377.0 L643.0,400.0 L605.8,398.2 Z" fill="#e0e2ec"/>
<path d="M608.4,336.8 L647.5,339.4 L643.0,400.0 L605.8,398.2 Z" fill="none" stroke="#2b3350" stroke-width="1.7" stroke-linejoin="round"/>
<path d="M627 377 C621 372, 618 368, 618 364 C618 361, 620.5 359, 623 359 C625 359, 626.3 360, 627 361.5 C627.7 360, 629 359, 631 359 C633.5 359, 636 361, 636 364 C636 368, 633 372, 627 377 Z" fill="#e5534b"/>
<text x="610" y="347" font-family="Liberation Sans" font-size="7" fill="#e5534b">A</text>
<path d="M643.3,341.5 L673.8,349.4 L657.0,405.0 L626.0,396.6 Z" fill="#f3f3f5" stroke="#2b3350" stroke-width="1.7" stroke-linejoin="round"/>
<path d="M632.6,375.7 L663.4,383.9 L657.0,405.0 L626.0,396.6 Z" fill="#e0e2ec"/>
<path d="M643.3,341.5 L673.8,349.4 L657.0,405.0 L626.0,396.6 Z" fill="none" stroke="#2b3350" stroke-width="1.7" stroke-linejoin="round"/>
<g fill="#2f3a5a"><circle cx="652.3" cy="368.5" r="4.3"/><circle cx="647.5" cy="375.5" r="4.3"/><circle cx="657" cy="375.5" r="4.3"/><path d="M651 375 L653.6 375 L655 383 L649.5 383 Z"/></g>
<text x="645" y="352" font-family="Liberation Sans" font-size="7" fill="#2f3a5a">2</text>
<path d="M669.6,365.1 L704.2,381.9 L679.8,432.1 L645.2,415.3 Z" fill="#f3f3f5" stroke="#2b3350" stroke-width="1.7" stroke-linejoin="round"/>
<path d="M654.5,396.2 L689.1,413.0 L679.8,432.1 L645.2,415.3 Z" fill="#e0e2ec"/>
<path d="M669.6,365.1 L704.2,381.9 L679.8,432.1 L645.2,415.3 Z" fill="none" stroke="#2b3350" stroke-width="1.7" stroke-linejoin="round"/>
<path d="M673.2 393 L679 400.8 L673.2 408.6 L667.4 400.8 Z" fill="#e5534b" transform="rotate(25 673.2 400.8)"/>
<text x="668" y="375" font-family="Liberation Sans" font-size="7" fill="#e5534b" transform="rotate(25 668 375)">K</text>
<g transform="rotate(-8 571.2 451.4)"><path d="M571.2,435.6 L586.2,443.9 L571.2,451.7 L556.2,443.9 Z" fill="#ffffff"/><path d="M556.2,443.9 L571.2,451.7 L571.2,467.1 L557.0,459.6 Z" fill="#f0f0f4"/><path d="M571.2,451.7 L586.2,443.9 L585.5,459.6 L571.2,467.1 Z" fill="#e0e2ec"/><path d="M571.2,435.6 L586.2,443.9 L585.5,459.6 L571.2,467.1 L557.0,459.6 L556.2,443.9 Z" fill="none" stroke="#2b3350" stroke-width="1.7" stroke-linejoin="round"/><path d="M556.2,443.9 L571.2,451.7 L586.2,443.9 M571.2,451.7 L571.2,467.1" fill="none" stroke="#2b3350" stroke-width="0.9"/><g fill="#2b3350"><circle cx="569.0" cy="443.1" r="1.8"/><circle cx="562.2" cy="450.6" r="1.8"/><circle cx="564.5" cy="456.6" r="1.8"/><circle cx="567.5" cy="461.9" r="1.8"/><circle cx="576.5" cy="453.6" r="1.8"/><circle cx="581.0" cy="452.1" r="1.8"/><circle cx="577.2" cy="460.4" r="1.8"/><circle cx="581.7" cy="458.1" r="1.8"/></g></g>
<g transform="rotate(10 611 446)"><path d="M611.0,429.7 L626.5,438.2 L611.0,446.3 L595.5,438.2 Z" fill="#ffffff"/><path d="M595.5,438.2 L611.0,446.3 L611.0,462.3 L596.3,454.5 Z" fill="#e24a48"/><path d="M611.0,446.3 L626.5,438.2 L625.7,454.5 L611.0,462.3 Z" fill="#c9393a"/><path d="M611.0,429.7 L626.5,438.2 L625.7,454.5 L611.0,462.3 L596.3,454.5 L595.5,438.2 Z" fill="none" stroke="#2b3350" stroke-width="1.7" stroke-linejoin="round"/><path d="M595.5,438.2 L611.0,446.3 L626.5,438.2 M611.0,446.3 L611.0,462.3" fill="none" stroke="#2b3350" stroke-width="0.9"/><g fill="#2b3350"><circle cx="608.7" cy="437.5" r="1.9"/><circle cx="601.7" cy="445.2" r="1.9"/><circle cx="604.0" cy="451.4" r="1.9"/><circle cx="607.1" cy="456.9" r="1.9"/><circle cx="616.4" cy="448.3" r="1.9"/><circle cx="621.1" cy="446.8" r="1.9"/><circle cx="617.2" cy="455.3" r="1.9"/><circle cx="621.9" cy="453.0" r="1.9"/></g></g>
<g transform="rotate(12 644.4 427.3)"><path d="M644.4,409.4 L661.4,418.8 L644.4,427.6 L627.4,418.8 Z" fill="#ffffff"/><path d="M627.4,418.8 L644.4,427.6 L644.4,445.2 L628.2,436.7 Z" fill="#f0f0f4"/><path d="M644.4,427.6 L661.4,418.8 L660.5,436.7 L644.4,445.2 Z" fill="#e0e2ec"/><path d="M644.4,409.4 L661.4,418.8 L660.5,436.7 L644.4,445.2 L628.2,436.7 L627.4,418.8 Z" fill="none" stroke="#2b3350" stroke-width="1.7" stroke-linejoin="round"/><path d="M627.4,418.8 L644.4,427.6 L661.4,418.8 M644.4,427.6 L644.4,445.2" fill="none" stroke="#2b3350" stroke-width="0.9"/><g fill="#2b3350"><circle cx="641.9" cy="417.9" r="2.0"/><circle cx="634.2" cy="426.4" r="2.0"/><circle cx="636.8" cy="433.2" r="2.0"/><circle cx="640.1" cy="439.2" r="2.0"/><circle cx="650.4" cy="429.9" r="2.0"/><circle cx="655.4" cy="428.2" r="2.0"/><circle cx="651.2" cy="437.5" r="2.0"/><circle cx="656.3" cy="434.9" r="2.0"/></g></g>
<circle cx="589.5" cy="338.4" r="8.9" fill="#f1b52e" stroke="#c8861c" stroke-width="1"/><circle cx="589.5" cy="338.4" r="6.4" fill="#f6c445" stroke="#c8861c" stroke-width="0.9"/><text x="589.5" y="341.9" font-family="Liberation Sans" font-weight="700" font-size="9.8" fill="#a8641a" text-anchor="middle">$</text>
<circle cx="679.5" cy="358.3" r="10" fill="#f1b52e" stroke="#c8861c" stroke-width="1"/><circle cx="679.5" cy="358.3" r="7.2" fill="#f6c445" stroke="#c8861c" stroke-width="0.9"/><text x="679.5" y="362.3" font-family="Liberation Sans" font-weight="700" font-size="11.0" fill="#a8641a" text-anchor="middle">$</text>
<circle cx="543.4" cy="417.3" r="10.8" fill="#f1b52e" stroke="#c8861c" stroke-width="1"/><circle cx="543.4" cy="417.3" r="7.8" fill="#f6c445" stroke="#c8861c" stroke-width="0.9"/><text x="543.4" y="421.6" font-family="Liberation Sans" font-weight="700" font-size="11.9" fill="#a8641a" text-anchor="middle">$</text>
<circle cx="607.4" cy="418.4" r="7.3" fill="#f1b52e" stroke="#c8861c" stroke-width="1"/><circle cx="607.4" cy="418.4" r="5.3" fill="#f6c445" stroke="#c8861c" stroke-width="0.9"/><text x="607.4" y="421.3" font-family="Liberation Sans" font-weight="700" font-size="8.0" fill="#a8641a" text-anchor="middle">$</text>
<circle cx="690" cy="425.2" r="12.8" fill="#f1b52e" stroke="#c8861c" stroke-width="1"/><circle cx="690" cy="425.2" r="9.2" fill="#f6c445" stroke="#c8861c" stroke-width="0.9"/><text x="690" y="429.6" font-family="Liberation Sans" font-weight="700" font-size="12.2" fill="#a8641a" text-anchor="middle">50</text>
<circle cx="650.2" cy="463" r="11.6" fill="#f1b52e" stroke="#c8861c" stroke-width="1"/><circle cx="650.2" cy="463" r="8.4" fill="#f6c445" stroke="#c8861c" stroke-width="0.9"/><text x="650.2" y="467.0" font-family="Liberation Sans" font-weight="700" font-size="11.0" fill="#a8641a" text-anchor="middle">50</text>
<circle cx="599" cy="471.4" r="7.3" fill="#f1b52e" stroke="#c8861c" stroke-width="1"/><circle cx="599" cy="471.4" r="5.3" fill="#f6c445" stroke="#c8861c" stroke-width="0.9"/><text x="599" y="474.3" font-family="Liberation Sans" font-weight="700" font-size="8.0" fill="#a8641a" text-anchor="middle">$</text>
<circle cx="670.1" cy="454.6" r="3.4" fill="#f5c24a" stroke="#2b3350" stroke-width="0.9"/>
<circle cx="542.8" cy="371.4" r="2.3" fill="#f5c24a" stroke="#2b3350" stroke-width="0.9"/>
<circle cx="658" cy="333.1" r="2.2" fill="#ddd" stroke="#2b3350" stroke-width="1"/>
<circle cx="542.8" cy="437.3" r="2.2" fill="#eee" stroke="#2b3350" stroke-width="1"/>
<circle cx="609" cy="331" r="1.3" fill="#e5534b"/><circle cx="618.4" cy="471.4" r="1.3" fill="#e5534b"/><circle cx="703.7" cy="404.5" r="1.5" fill="#5a5ad0"/>
</svg></div>
  <div class="ct">Graphing Random Events</div>
  <div class="cs">by Dr. Kelsey Joy LLC</div>
  <div class="cd">This is a simple application to show<br>examples of interactivity, images,<br>and graphs in the context of rando…</div>
  <div class="cv">version 10.25</div>
</div>
</body></html>
